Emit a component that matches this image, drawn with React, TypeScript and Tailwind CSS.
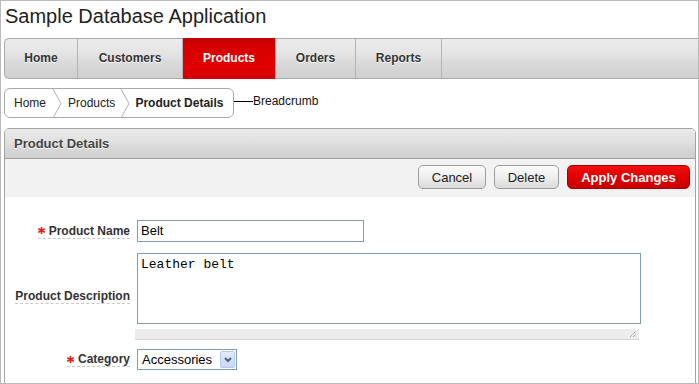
import React from "react";

function Chevron() {
  return (
    <svg width="10" height="29" viewBox="0 0 10 29" className="shrink-0 block">
      <polyline points="1,0 9,14.5 1,29" fill="none" stroke="#b0b0b0" strokeWidth="1" />
    </svg>
  );
}

function Btn({ children, w }: { children: React.ReactNode; w: string }) {
  return (
    <div
      className={`${w} h-[24px] rounded-[5px] border border-[#9c9c9c] bg-[linear-gradient(to_bottom,#fbfbfb,#eeeeee_50%,#dadada)] text-[13px] leading-[23px] text-center text-[#222] shadow-[inset_0_1px_0_#fff]`}
    >
      {children}
    </div>
  );
}

function Asterisk() {
  return (
    <svg width="7" height="7" viewBox="0 0 7 7" className="mr-[4px] shrink-0">
      <g stroke="#e02020" strokeWidth="1.6" strokeLinecap="round">
        <line x1="3.5" y1="0.5" x2="3.5" y2="6.5" />
        <line x1="0.8" y1="2" x2="6.2" y2="5" />
        <line x1="0.8" y1="5" x2="6.2" y2="2" />
      </g>
    </svg>
  );
}

export default function App() {
  return (
    <div className="w-[699px] h-[384px] overflow-hidden bg-white border border-[#b9b9b9] font-['Liberation_Sans',Arial,sans-serif] text-[#222]">
      <div className="h-[37px] pl-[4px] pt-[4px] text-[20px] leading-[23px] text-[#222]">Sample Database Application</div>

      {/* Nav */}
      <div className="ml-[3px] h-[41px] flex border-t border-b border-l border-[#a9a9a9] rounded-l-[5px] bg-[linear-gradient(to_bottom,#ebebeb,#e5e5e5_35%,#dadada_60%,#cfcfcf)] text-[12px] font-bold text-[#333] [text-shadow:0_1px_0_#fff]">
        <div className="w-[73px] border-r border-[#b4b4b4] flex items-center justify-center pb-[2px]">Home</div>
        <div className="w-[105px] border-r border-[#b4b4b4] flex items-center justify-center pb-[2px]">Customers</div>
        <div className="w-[92px] -my-px flex items-center justify-center pb-[2px] bg-[linear-gradient(to_bottom,#c40000,#d60000_20%,#e00000_70%,#d40000)] text-white [text-shadow:none]">Products</div>
        <div className="w-[81px] border-r border-l border-[#b4b4b4] flex items-center justify-center pb-[2px]">Orders</div>
        <div className="w-[86px] border-r border-[#b4b4b4] flex items-center justify-center pb-[2px]">Reports</div>
      </div>

      {/* Breadcrumb */}
      <div className="flex items-center mt-[9px] ml-[3px]">
        <div className="w-[230px] h-[30px] border border-[#a9a9a9] rounded-[6px] flex items-stretch text-[12px] text-[#222] overflow-hidden">
          <span className="pl-[9px] flex items-center">Home</span>
          <span className="ml-[6px] flex"><Chevron /></span>
          <span className="ml-[6px] flex items-center">Products</span>
          <span className="ml-[5px] flex"><Chevron /></span>
          <span className="ml-[5px] flex items-center font-bold">Product Details</span>
        </div>
        <div className="w-[19px] h-px bg-black -mt-[3px]"></div>
        <span className="text-[12px] -mt-[5px] text-[#111]">Breadcrumb</span>
      </div>

      {/* Panel */}
      <div className="mt-[10px] ml-[3px] w-[692px] h-[300px] border border-[#a3a3a3] rounded-t-[5px] overflow-hidden">
        <div className="h-[30px] border-b border-[#a0a0a0] bg-[linear-gradient(to_bottom,#e9e9e9,#e2e2e2_40%,#d6d6d6_70%,#d0d0d0)] pl-[9px] flex items-center text-[13px] font-bold text-[#444] [text-shadow:0_1px_0_#fff]">
          Product Details
        </div>
        <div className="h-[38px] bg-[#f2f2f2] flex justify-end items-start pt-[6px] pr-[5px] gap-[8px]">
          <Btn w="w-[68px]">Cancel</Btn>
          <Btn w="w-[65px]">Delete</Btn>
          <div className="w-[123px] h-[24px] rounded-[5px] border border-[#a80000] bg-[linear-gradient(to_bottom,#f01010,#e00000_50%,#c80000)] text-[13px] font-bold leading-[23px] text-center text-white">
            Apply Changes
          </div>
        </div>

        {/* Form */}
        <div className="pt-[23px] flex flex-col text-[12px] text-[#333]">
          <div className="flex items-center h-[22px]">
            <div className="w-[125px] flex justify-end">
              <span className="inline-flex items-center h-[15px] border-b border-dashed border-[#c8c8c8] font-bold leading-[14px]">
                <Asterisk />Product Name
              </span>
            </div>
            <div className="ml-[7px] w-[227px] h-[22px] border border-[#7f9db9] text-[13px] leading-[20px] pl-[3px] text-black">Belt</div>
          </div>

          <div className="flex items-center mt-[11px]">
            <div className="w-[125px] flex justify-end">
              <span className="inline-flex items-center h-[15px] border-b border-dashed border-[#c8c8c8] font-bold leading-[14px]">Product Description</span>
            </div>
            <div className="ml-[7px] flex flex-col">
              <div className="w-[504px] h-[71px] border border-[#7f9db9] font-['Liberation_Mono','Courier_New',monospace] text-[13px] leading-[16px] pt-[3px] pl-[3px] text-black whitespace-pre">Leather belt</div>
              <div className="-ml-[2px] mt-[5px] w-[504px] h-[11px] bg-[#ececec] border-b border-[#d6d6d6] flex justify-end items-end pr-[2px] pb-[1px]">
                <svg width="8" height="8" viewBox="0 0 8 8">
                  <line x1="1" y1="7" x2="7" y2="1" stroke="#777" strokeWidth="1" strokeDasharray="1 1" />
                  <line x1="4" y1="7" x2="7" y2="4" stroke="#777" strokeWidth="1" strokeDasharray="1 1" />
                </svg>
              </div>
            </div>
          </div>

          <div className="flex items-center mt-[9px] h-[21px]">
            <div className="w-[125px] flex justify-end">
              <span className="inline-flex items-center h-[15px] border-b border-dashed border-[#c8c8c8] font-bold leading-[14px]">
                <Asterisk />Category
              </span>
            </div>
            <div className="ml-[7px] w-[100px] h-[21px] border border-[#7f9db9] flex items-center justify-between text-[13px] text-black pl-[4px] pr-[1px]">
              <span className="leading-[19px]">Accessories</span>
              <div className="w-[15px] h-[17px] rounded-[2px] border border-[#b6c8ee] bg-[linear-gradient(to_bottom,#e3ebfd,#c7d6fa)] flex items-center justify-center">
                <svg width="8" height="6" viewBox="0 0 8 6">
                  <polyline points="1,1 4,4 7,1" fill="none" stroke="#4d6185" strokeWidth="2" />
                </svg>
              </div>
            </div>
          </div>
        </div>
      </div>
    </div>
  );
}
